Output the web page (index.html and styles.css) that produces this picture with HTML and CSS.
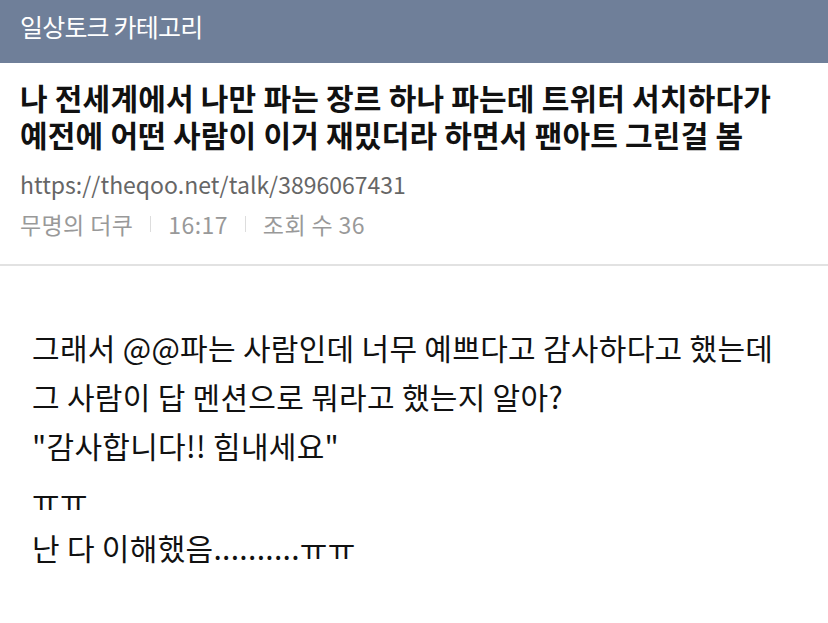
FILE: index.html
```html
<!DOCTYPE html>
<html>
<head>
  <meta charset="UTF-8">
  <title>일상토크 카테고리</title>
  <link rel="stylesheet" href="styles.css">
</head>
<body>
  <div class="topbar">일상토크 카테고리</div>

  <div class="post-head">
    <h1 class="title">나 전세계에서 나만 파는 장르 하나 파는데 트위터 서치하다가<br>예전에 어떤 사람이 이거 재밌더라 하면서 팬아트 그린걸 봄</h1>
    <div class="url">https://theqoo.net/talk/3896067431</div>
    <div class="meta">
      <span>무명의 더쿠</span>
      <span class="sep"></span>
      <span>16:17</span>
      <span class="sep"></span>
      <span>조회 수 36</span>
    </div>
  </div>

  <div class="post-body">
    <p>그래서 @@파는 사람인데 너무 예쁘다고 감사하다고 했는데<br>
    그 사람이 답 멘션으로 뭐라고 했는지 알아?<br>
    "감사합니다!! 힘내세요"</p>
    <p class="gap">ㅠㅠ<br>
    난 다 이해했음..........ㅠㅠ</p>
  </div>
</body>
</html>
```

FILE: styles.css
```css
body {
  margin: 0;
  font-family: "Noto Sans CJK KR", "Noto Sans", sans-serif;
  background: #fff;
  color: #111;
}

.topbar {
  height: 63px;
  background-color: #6f7f99;
  color: #fff;
  font-size: 25px;
  line-height: 52px;
  padding-left: 20px;
  letter-spacing: -0.8px;
}

.post-head {
  padding: 16px 20px 24px;
  border-bottom: 2px solid #e2e2e2;
  white-space: nowrap;
}

.title {
  margin: 0;
  font-size: 30px;
  line-height: 37px;
  font-weight: bold;
  color: #111;
  letter-spacing: 0.2px;
}

.url {
  margin-top: 15px;
  font-size: 23px;
  line-height: 32px;
  color: #666;
}

.meta {
  margin-top: 8px;
  font-size: 23px;
  line-height: 32px;
  color: #999;
  display: flex;
  align-items: center;
  letter-spacing: 0.4px;
}

.sep {
  display: inline-block;
  width: 1px;
  height: 16px;
  background: #ddd;
  margin: 0 17px;
}

.post-body {
  padding: 57px 32px 30px;
  font-size: 30px;
  line-height: 49px;
  color: #111;
  letter-spacing: 0.3px;
}

.post-body p {
  margin: 0;
}

.post-body .gap {
  margin-top: 4px;
}
```
